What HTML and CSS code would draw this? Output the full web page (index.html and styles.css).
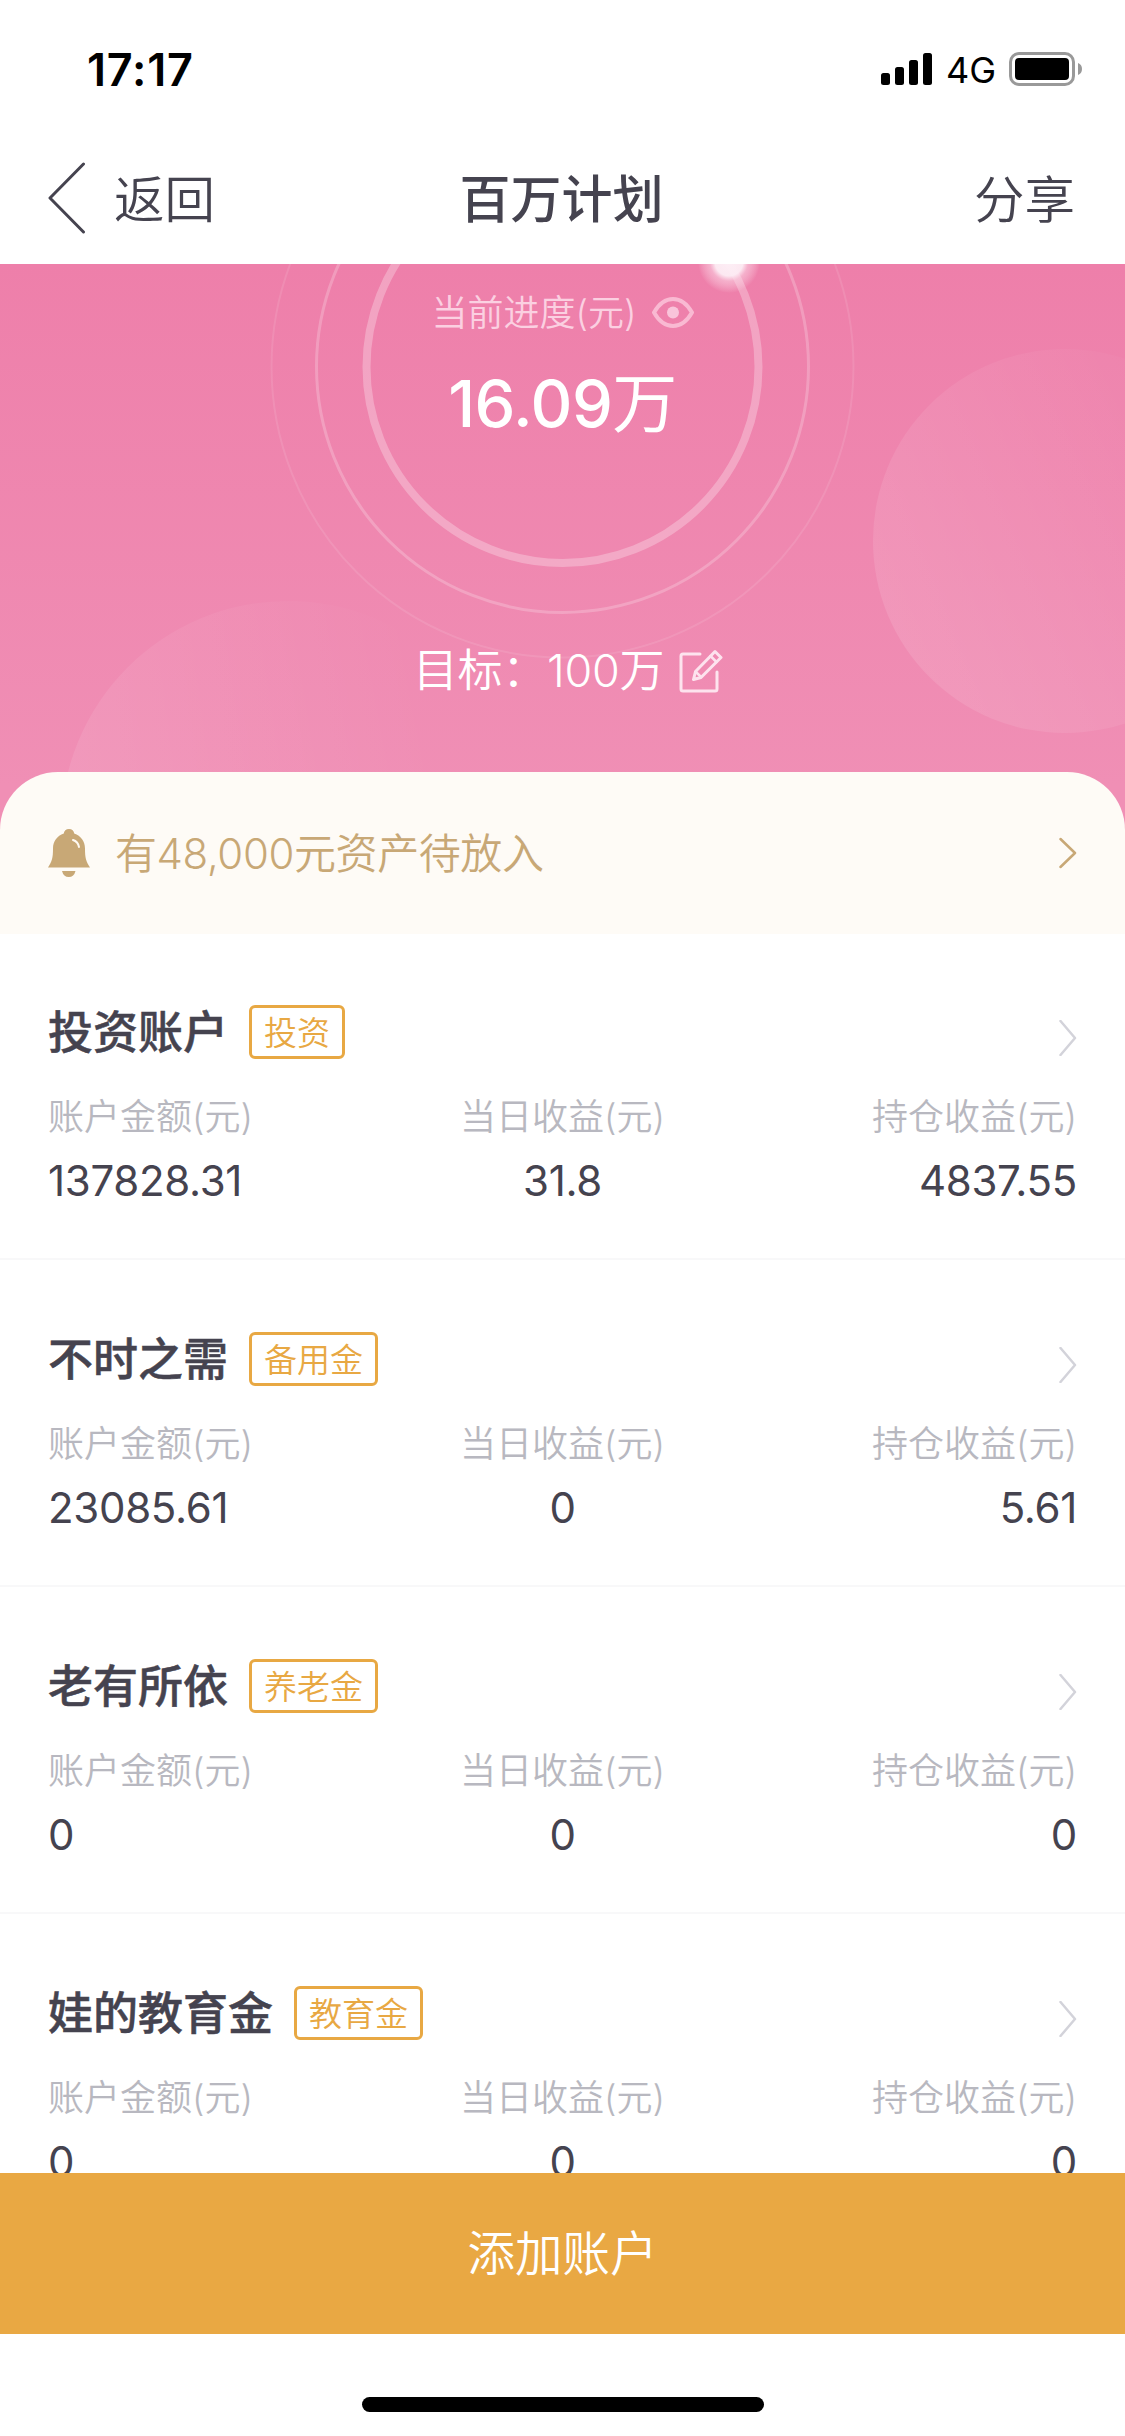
FILE: index.html
```html
<!DOCTYPE html>
<html lang="zh-CN">
<head>
<meta charset="utf-8">
<title>百万计划</title>
<link rel="stylesheet" href="styles.css">
</head>
<body>
<div class="status">
  <span class="time">17:17</span>
  <div class="indicators">
    <svg class="signal" width="51" height="32" viewBox="0 0 51 32"><rect x="0" y="20" width="9" height="12" rx="2.5"/><rect x="14" y="14" width="9" height="18" rx="2.5"/><rect x="28" y="7" width="9" height="25" rx="2.5"/><rect x="42" y="0" width="9" height="32" rx="2.5"/></svg>
    <span class="network">4G</span>
    <svg class="battery" width="74" height="34" viewBox="0 0 74 34"><rect x="1.5" y="1.5" width="63" height="31" rx="8.5" fill="none" stroke="#999" stroke-width="3"/><rect x="6" y="6" width="54" height="22" rx="4"/><path d="M69 11q4 1.500 4 6t-4 6z" fill="#999"/></svg>
  </div>
</div>
<header class="nav">
  <div class="back">
    <svg width="38" height="72" viewBox="0 0 38 72"><path d="M35.500 2 2 36 35.500 70"/></svg>
    <span>返回</span>
  </div>
  <h1>百万计划</h1>
  <span class="share">分享</span>
</header>
<section class="hero">
  <svg class="backdrop" width="1125" height="580" viewBox="0 0 1125 580">
    <defs>
      <linearGradient id="bubble" x1="0" y1="0.6" x2="1" y2="0.4"><stop offset="0" stop-color="#fff" stop-opacity=".1"/><stop offset=".85" stop-color="#fff" stop-opacity="0"/></linearGradient>
      <linearGradient id="bubble2" x1="0" y1="0.75" x2="1" y2="0.25"><stop offset="0" stop-color="#fff" stop-opacity=".12"/><stop offset=".9" stop-color="#fff" stop-opacity="0.01"/></linearGradient>
      <radialGradient id="glow"><stop offset="0" stop-color="#fdeef5"/><stop offset=".45" stop-color="#fdeef5" stop-opacity=".95"/><stop offset=".62" stop-color="#fce0ec" stop-opacity=".5"/><stop offset="1" stop-color="#fff" stop-opacity="0"/></radialGradient>
    </defs>
    <circle cx="288" cy="564" r="227" fill="url(#bubble)"/>
    <circle cx="1065" cy="277" r="192" fill="url(#bubble2)"/>
    <g fill="none" stroke="#fff">
      <circle cx="562.500" cy="102.500" r="291" stroke-width="2" stroke-opacity=".1"/>
      <circle cx="562.500" cy="102.500" r="246" stroke-width="3" stroke-opacity=".22"/>
      <circle cx="562.500" cy="103" r="196" stroke-width="8" stroke-opacity=".28"/>
    </g>
    <circle cx="729" cy="-2" r="31" fill="url(#glow)"/>
  </svg>
  <div class="progress-label"><span>当前进度(元)</span>
    <svg width="42" height="31" viewBox="0 0 42 31"><path d="M2 15.500C8 5 14 2 21 2S34 5 40 15.500C34 26 28 29 21 29S8 26 2 15.500Z" fill="none" stroke="#f9b9d2" stroke-width="4" stroke-linejoin="round"/><circle cx="21" cy="15.500" r="6" fill="#f9c4da"/></svg>
  </div>
  <div class="progress-value">16.09<span class="unit">万</span></div>
  <div class="target"><span>目标：100万</span>
    <svg width="44" height="44" viewBox="0 0 44 44"><g fill="none" stroke="#fde3ee" stroke-width="3" stroke-linejoin="round" stroke-linecap="round"><path d="M21 5H4Q2 5 2 7V40Q2 42 4 42H36Q38 42 38 40V23"/><path d="M36 2.500 42 8.500 22 28.500 14.500 30.500 16.500 22.500Z"/><path d="M31.500 7 37.500 13M17 23 22 28" stroke-width="2.500"/></g></svg>
  </div>
</section>
<section class="notice">
  <svg class="bell" width="42" height="48" viewBox="0 0 42 48"><path d="M21 0C24 0 26 2 26.200 4.600 33 7 37 12.500 37 19.500 37 29 38 32.500 42 38.500H0C4 32.500 5 29 5 19.500 5 12.500 9 7 15.800 4.600 16 2 18 0 21 0Z" fill="#c8a876"/><path d="M14 42H27.500Q26 48 20.800 48 15.500 48 14 42Z" fill="#c8a876"/><path d="M25 11Q30 12.500 31 18" fill="none" stroke="#fffaf2" stroke-width="2" stroke-linecap="round"/></svg>
  <span class="notice-text">有48,000元资产待放入</span>
  <svg class="arrow gold" width="18" height="32" viewBox="0 0 18 32"><path d="M1.500 2 16 16 1.500 30"/></svg>
</section>
<main class="accounts">
  <article class="account">
    <div class="heading"><h2>投资账户</h2><span class="tag">投资</span><svg class="arrow" width="18" height="36" viewBox="0 0 18 36"><path d="M1.500 1 16 18 1.500 35"/></svg></div>
    <dl><div><dt>账户金额(元)</dt><dd>137828.31</dd></div><div><dt>当日收益(元)</dt><dd>31.8</dd></div><div><dt>持仓收益(元)</dt><dd>4837.55</dd></div></dl>
  </article>
  <article class="account">
    <div class="heading"><h2>不时之需</h2><span class="tag">备用金</span><svg class="arrow" width="18" height="36" viewBox="0 0 18 36"><path d="M1.500 1 16 18 1.500 35"/></svg></div>
    <dl><div><dt>账户金额(元)</dt><dd>23085.61</dd></div><div><dt>当日收益(元)</dt><dd>0</dd></div><div><dt>持仓收益(元)</dt><dd>5.61</dd></div></dl>
  </article>
  <article class="account">
    <div class="heading"><h2>老有所依</h2><span class="tag">养老金</span><svg class="arrow" width="18" height="36" viewBox="0 0 18 36"><path d="M1.500 1 16 18 1.500 35"/></svg></div>
    <dl><div><dt>账户金额(元)</dt><dd>0</dd></div><div><dt>当日收益(元)</dt><dd>0</dd></div><div><dt>持仓收益(元)</dt><dd>0</dd></div></dl>
  </article>
  <article class="account">
    <div class="heading"><h2>娃的教育金</h2><span class="tag">教育金</span><svg class="arrow" width="18" height="36" viewBox="0 0 18 36"><path d="M1.500 1 16 18 1.500 35"/></svg></div>
    <dl><div><dt>账户金额(元)</dt><dd>0</dd></div><div><dt>当日收益(元)</dt><dd>0</dd></div><div><dt>持仓收益(元)</dt><dd>0</dd></div></dl>
  </article>
</main>
<button class="add">添加账户</button>
<footer class="home"><span class="home-bar"></span></footer>
</body>
</html>
```
FILE: styles.css
```css
* { box-sizing: border-box; margin: 0; padding: 0; }
body {
  width: 1125px; height: 2436px; overflow: hidden;
  display: flex; flex-direction: column;
  background: #fff; color: #45434f;
  font-family: Inter, "Noto Sans CJK SC", sans-serif;
  font-weight: 350;
}
svg { display: block; flex: none; }
.status { height: 132px; flex: none; display: flex; justify-content: space-between; padding: 42px 42px 0 87px; color: #000; }
.time { font-size: 45px; line-height: 56px; font-weight: 600; letter-spacing: 0.8px; }
.indicators { display: flex; height: 54px; align-items: center; }
.network { font-size: 36px; line-height: 56px; font-weight: 400; margin: 2px 13px 0 14px; }
.nav { height: 132px; flex: none; display: grid; grid-template-columns: 1fr auto 1fr; align-items: center; padding: 0 50px 0 48px; font-size: 50.5px; line-height: 60px; }
.back { display: flex; align-items: center; gap: 28px; }
.back span, .nav h1, .share { padding-top: 4px; }
.back path { fill: none; stroke: #45434f; stroke-width: 3; stroke-linecap: round; stroke-linejoin: round; }
.nav h1 { font-size: 51px; font-weight: 500; }
.share { justify-self: end; }
.hero { height: 580px; flex: none; position: relative; display: flex; flex-direction: column; align-items: center; background: linear-gradient(#ee7faa, #f08fb5 90%); color: #fff; overflow: hidden; }
.backdrop { position: absolute; left: 0; top: 0; }
.progress-label, .progress-value, .target { position: relative; }
.progress-label { margin-top: 25px; height: 46px; display: flex; align-items: center; gap: 15px; font-size: 36px; line-height: 48px; color: #fbd0e1; }
.progress-label span { padding-top: 1px; }
.progress-value { margin-top: 27px; font-size: 65px; line-height: 84px; font-weight: 500; letter-spacing: -0.5px; }
.unit { font-weight: 400; }
.target { margin-top: 193px; margin-left: 11px; height: 64px; display: flex; align-items: center; gap: 15px; font-size: 45px; line-height: 64px; letter-spacing: -0.3px; }
.notice { height: 162px; flex: none; position: relative; margin-top: -72px; border-radius: 58px 58px 0 0; background: #fefbf6; padding: 0 48px; display: flex; align-items: center; color: #c8a876; }
.notice-text { margin-left: 25px; padding-top: 1px; flex: 1; font-size: 42px; line-height: 60px; letter-spacing: -0.4px; }
.arrow { margin-left: auto; fill: none; stroke: #d3d3da; stroke-width: 2.5; stroke-linecap: round; stroke-linejoin: round; }
.gold { stroke: #c8a876; }
.accounts { flex: 1; min-height: 0; margin-top: -1px; overflow: hidden; }
.account { height: 327px; padding: 72px 48px 0; border-bottom: 2px solid #f8f8f9; }
.heading { display: flex; align-items: center; height: 54px; }
.heading h2 { font-size: 45px; line-height: 54px; font-weight: 500; margin-right: 21px; padding-top: 2px; -webkit-text-stroke: 0.5px currentColor; }
.heading .arrow { margin-top: 12px; }
.tag { height: 54px; border: 3px solid #e8a843; border-radius: 6px; padding: 1px 12px 0; font-size: 33px; line-height: 48px; color: #e8a843; }
dl { display: grid; grid-template-columns: 1fr 1fr 1fr; margin-top: 34px; }
dl > div:nth-child(2) { text-align: center; }
dl > div:nth-child(3) { text-align: right; }
dt { font-size: 36px; line-height: 48px; color: #b8b8c0; }
dd { margin-top: 10px; font-size: 42px; line-height: 60px; font-weight: 400; letter-spacing: -0.3px; }
.add { height: 161px; flex: none; border: 0; background: #e9a843; color: #fff; font: 350 47.5px/161px Inter, "Noto Sans CJK SC", sans-serif; }
.home { height: 102px; flex: none; display: flex; justify-content: center; padding-top: 63px; }
.home-bar { width: 402px; height: 15px; border-radius: 8px; background: #000; }
```
